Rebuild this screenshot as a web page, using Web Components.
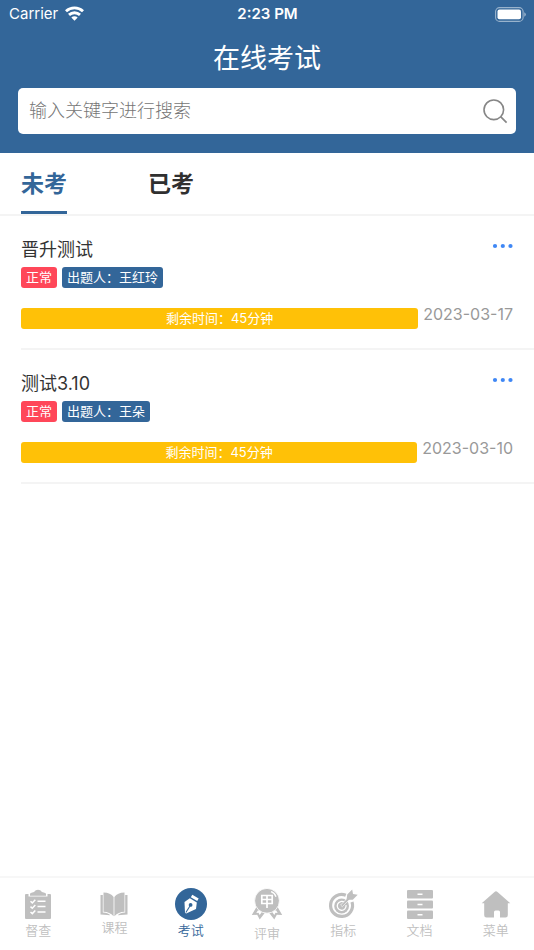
<!DOCTYPE html>
<html lang="zh-CN">
<head>
<meta charset="utf-8">
<meta name="viewport" content="width=device-width, initial-scale=1">
<title>在线考试</title>
<style>
  html, body { height: 100%; margin: 0; }
  body {
    --brand: #336699;
    --line: #f4f4f4;
    font-family: Inter, "Noto Sans CJK SC", sans-serif;
    background: #fff;
    color: #333;
  }
</style>
</head>
<body>
<exam-app></exam-app>

<script>
const define = (name, html, setup) => {
  const template = document.createElement('template');
  template.innerHTML = html;
  customElements.define(name, class extends HTMLElement {
    connectedCallback() {
      if (this.shadowRoot) return;
      this.attachShadow({ mode: 'open' }).append(template.content.cloneNode(true));
      if (setup) setup(this, this.shadowRoot);
    }
  });
};

define('status-bar', `
  <style>
    :host { display: grid; grid-template-columns: 1fr auto 1fr; align-items: center; height: 28px; padding: 0 8px 0 9px; font-size: 15px; line-height: 20px; color: #fff; }
    .left { display: flex; align-items: center; gap: 7px; }
    .time { font-weight: 600; }
    .battery { justify-self: end; }
    svg { display: block; }
  </style>
  <span class="left"><span>Carrier</span>
    <svg width="19" height="19" viewBox="0 0 19 19" fill="none" stroke="#fff" stroke-width="2.900" aria-hidden="true">
      <path d="M1 6.200C5.800 1.800 13.200 1.800 18 6.200"/><path d="M4 9.900c3.200-2.900 7.800-2.900 11 0"/><path d="M9.500 15.800 6.300 12.600c1.900-1.700 4.500-1.700 6.400 0z" fill="#fff" stroke="none"/>
    </svg>
  </span>
  <span class="time">2:23 PM</span>
  <svg class="battery" width="31" height="15" viewBox="0 0 31 15" aria-hidden="true">
    <rect x=".6" y=".6" width="27.500" height="13.800" rx="4" fill="none" stroke="#fff" stroke-opacity=".5" stroke-width="1.100"/>
    <rect x="2.500" y="2.500" width="23.500" height="9.800" rx="2" fill="#fff"/>
    <path d="M29.300 5.200q3 2.200 0 4.600z" fill="#fff" fill-opacity=".55"/>
  </svg>`);

define('search-box', `
  <style>
    :host { display: block; }
    form { display: flex; align-items: center; height: 46px; padding: 0 8px 0 11px; background: #fff; border-radius: 5px; margin: 0; }
    input { flex: 1; min-width: 0; border: 0; outline: 0; padding: 0; background: none; font: 300 18px/28px Inter, "Noto Sans CJK SC", sans-serif; color: #333; }
    input::placeholder { color: #757575; opacity: 1; }
    button { border: 0; background: none; padding: 0; display: flex; }
  </style>
  <form role="search">
    <input type="text" aria-label="搜索" placeholder="输入关键字进行搜索">
    <button type="button" aria-label="搜索">
      <svg width="26" height="26" viewBox="0 0 26 26" fill="none" stroke="#868686" stroke-width="1.600"><circle cx="11.800" cy="11.800" r="9.800"/><path d="m18.600 18.600 6 6"/></svg>
    </button>
  </form>`);

define('page-header', `
  <style>
    :host { display: block; background: var(--brand); padding-bottom: 19px; }
    h1 { margin: 0; padding: 11px 0 9px; font-size: 27px; line-height: 40px; font-weight: 400; text-align: center; color: #fff; }
    search-box { margin: 0 18px; }
  </style>
  <status-bar></status-bar>
  <h1><slot></slot></h1>
  <search-box></search-box>`);

define('tab-bar', `
  <style>
    :host { display: flex; gap: 81px; padding: 0 21px; border-bottom: 2px solid var(--line); }
    button { border: 0; border-bottom: 3px solid transparent; background: none; padding: 12px 0; font: 600 23px/34px "Noto Sans CJK SC", sans-serif; color: #303030; }
    button[aria-selected="true"] { color: var(--brand); border-color: var(--brand); }
  </style>
  <button role="tab" aria-selected="true">未考</button>
  <button role="tab" aria-selected="false">已考</button>`,
  host => host.setAttribute('role', 'tablist'));

define('tag-label', `
  <style>
    :host { display: block; padding: 0 5px; border-radius: 3px; background: var(--tag, var(--brand)); color: #fff; font-size: 13px; line-height: 21px; }
  </style><slot></slot>`);

define('exam-item', `
  <style>
    :host { display: block; margin-left: 21px; padding: 19px 21px 20px 0; border-bottom: 2px solid var(--line); }
    header { display: flex; justify-content: space-between; }
    h2 { margin: 0; font-size: 18px; line-height: 30px; font-weight: 400; }
    button { align-self: flex-start; border: 0; background: none; padding: 8px 0; display: flex; }
    .tags { display: flex; gap: 5px; margin: 2px 0 20px; }
    .danger { --tag: #ff4759; }
    .foot { display: flex; gap: 5px; height: 20px; }
    .bar { flex: 1; border-radius: 3px; background: #ffc107; color: #fff; font-size: 13px; line-height: 21px; height: 21px; text-align: center; }
    time { font-size: 16px; line-height: 12px; color: #999; }
  </style>
  <header><h2><slot></slot></h2>
    <button aria-label="更多"><svg width="21" height="6" viewBox="0 0 21 6" fill="#3f87f5"><circle cx="3" cy="3" r="2.100"/><circle cx="10.800" cy="3" r="2.100"/><circle cx="18.500" cy="3" r="2.100"/></svg></button>
  </header>
  <div class="tags"><tag-label class="danger">正常</tag-label><tag-label><slot name="author"></slot></tag-label></div>
  <div class="foot"><div class="bar"><slot name="remaining"></slot></div><time></time></div>`,
  (host, root) => {
    const time = root.querySelector('time');
    time.textContent = time.dateTime = host.getAttribute('date');
  });

define('nav-item', `
  <style>
    :host { flex: 1; min-width: 0; }
    a { display: flex; flex-direction: column; align-items: center; gap: 1px; color: #bfbfbf; text-decoration: none; font-size: 13px; line-height: 18px; font-weight: 350; }
    :host([active]) a { color: var(--brand); }
    ::slotted(svg) { display: block; fill: currentColor; }
  </style>
  <a href="#"><slot name="icon"></slot><slot></slot></a>`);

define('nav-bar', `
  <style>
    :host { display: flex; align-items: flex-start; padding: 10px 0 8px; border-top: 2px solid #f7f7f7; background: #fff; }
  </style>
  <nav-item><svg slot="icon" width="32" height="32" viewBox="0 0 32 32">
    <path d="M4 6h2.500v2.500h19V6H28q1 0 1 1v23q0 1-1 1H4q-1 0-1-1V7q0-1 1-1z"/><path d="M8 7.800V6q0-1 1.500-1.200L12 4q1.500-2.200 4-2.200T20 4l2.500.8Q24 5 24 6v1.800z"/>
    <g fill="none" stroke="#fff" stroke-width="1.500"><path d="m8.500 13.300 1.800 1.600 3-3.200M8.500 18.600l1.800 1.600 3-3.200M8.500 24l1.800 1.600 3-3.200M15.500 13.300h8M15.500 18.600h8M15.500 24h8"/></g></svg>督查</nav-item>
  <nav-item><svg slot="icon" width="32" height="29" viewBox="0 0 32 29">
    <path d="M5.500 4.500Q12.500 4.500 15.600 9v19.200q-4-4.500-10.100-4.500zM26.500 4.500Q19.500 4.500 16.400 9v19.200q4-4.500 10.100-4.500z"/>
    <path d="M2.500 7H4.800v17.500q5 0 7.500 2.800l-9.800-.8zM29.500 7H27.200v17.500q-5 0-7.500 2.800l9.800-.8z"/></svg>课程</nav-item>
  <nav-item active><svg slot="icon" width="32" height="32" viewBox="0 0 32 32">
    <circle cx="16" cy="16" r="16"/><path fill="#fff" d="m17.300 6.800 6.400 3.700-1.500 2.500-6.400-3.700z"/><path fill="#fff" d="m14.800 10.300 7 4.100-.8 6.700-9.800 4.400-1.200-.7-.5-10.800z"/>
    <g fill="#336699"><circle cx="15.600" cy="16.900" r="1.900"/><path d="m15 17 .9.600-4.600 7.200-.9-.6z"/></g></svg>考试</nav-item>
  <nav-item><svg slot="icon" width="32" height="35" viewBox="0 0 32 35">
    <path d="M6 18 .8 27l5.400-.3L8.700 31.500l6.800-8.700zM26 18l5.200 9-5.400-.3-2.500 4.800-6.800-8.700z"/><path fill="#fff" d="M7 22.200 5.300 24.900l2.200-.1 1.200 2.200 2.400-3.400zM25 22.200l1.700 2.700-2.200-.1-1.200 2.200-2.400-3.400z"/>
    <circle cx="16" cy="12.800" r="12.400" stroke="#fff" stroke-width=".8"/>
    <g fill="none" stroke="#fff"><path stroke-width="1.700" d="M10.800 7.500h10.400v8H10.800zM10.800 11.500h10.400M16 7.500v12.500"/><path stroke-width="1.300" d="M20 3.700q3.800 1.200 5 5"/></g></svg>评审</nav-item>
  <nav-item><svg slot="icon" width="32" height="32" viewBox="0 0 32 32">
    <path fill="none" stroke="currentColor" stroke-width="3.200" d="M18.800 7.300A11 11 0 1 0 25 14"/>
    <circle cx="14.600" cy="18" r="7.400"/><path fill="none" stroke="#fff" stroke-width="1.300" d="M17.600 14.600a4.400 4.400 0 1 0 1.400 2.500"/><path d="m13.600 17 8.800-8.800 1.700 1.700-8.800 8.800z" stroke="#fff" stroke-width=".6"/><path d="m19.600 11.800.6-5.400 5-4.900.8 4.500 4.700.8-4.900 5z"/></svg>指标</nav-item>
  <nav-item><svg slot="icon" width="32" height="32" viewBox="0 0 32 32">
    <rect x="3" y="2" width="26" height="8.500" rx="1"/><rect x="3" y="12.500" width="26" height="8" rx="1"/><rect x="3" y="22.500" width="26" height="8.500" rx="1"/>
    <path stroke="#fff" stroke-width="1.400" d="M13.500 6.300h5M13.500 16.500h5M13.500 26.700h5"/></svg>文档</nav-item>
  <nav-item><svg slot="icon" width="32" height="32" viewBox="0 0 32 32">
    <path d="M16 3.200q.8 0 1.500.7L30.300 15.300H27.800v11.900q0 2.300-2.300 2.300H20v-5.500q0-1.500-1.500-1.500h-3Q14 22.500 14 24v5.500H6.500q-2.300 0-2.300-2.300V15.300H1.700L14.500 3.900Q15.200 3.200 16 3.200z"/></svg>菜单</nav-item>`,
  host => host.setAttribute('role', 'navigation'));

define('exam-app', `
  <style>
    :host { display: flex; flex-direction: column; min-height: 100%; }
    main { flex: 1; }
  </style>
  <page-header>在线考试</page-header>
  <tab-bar></tab-bar>
  <main>
    <exam-item date="2023-03-17">晋升测试<span slot="author">出题人：王红玲</span><span slot="remaining">剩余时间：45分钟</span></exam-item>
    <exam-item date="2023-03-10">测试3.10<span slot="author">出题人：王朵</span><span slot="remaining">剩余时间：45分钟</span></exam-item>
  </main>
  <nav-bar></nav-bar>`);
</script>
</body>
</html>
